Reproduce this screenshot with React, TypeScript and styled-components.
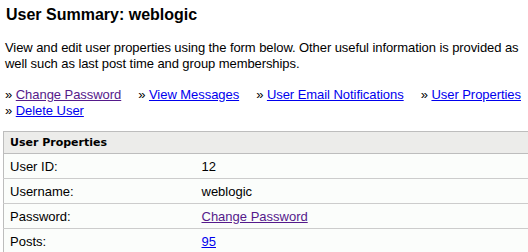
import styled, { createGlobalStyle } from "styled-components";

const GlobalStyle = createGlobalStyle`
  html, body {
    margin: 0;
    padding: 0;
    background: #fff;
    overflow: hidden;
  }
  body {
    font-family: "Liberation Sans", Arial, sans-serif;
    color: #000;
  }
`;

const Page = styled.div`
  padding: 0 0 0 3px;
`;

const Title = styled.h1`
  margin: 0;
  padding: 5px 0 0 3px;
  font-size: 16px;
  line-height: 20px;
  font-weight: bold;
`;

const Intro = styled.p`
  margin: 15px 0 0 2px;
  width: 523px;
  font-size: 13px;
  line-height: 16px;
  letter-spacing: -0.08px;
`;

const LinkBar = styled.div`
  margin: 15px 0 0 2px;
  display: flex;
  flex-wrap: wrap;
  column-gap: 17px;
  width: 523px;
  font-size: 13px;
  line-height: 16px;
  letter-spacing: -0.05px;
`;

const LinkItem = styled.span`
  white-space: nowrap;
`;

const Link = styled.a<{ $visited?: boolean }>`
  color: ${(p) => (p.$visited ? "#551a8b" : "#0000ee")};
  text-decoration: underline;
`;

const Table = styled.table`
  margin-top: 12px;
  width: 560px;
  table-layout: fixed;
  border-collapse: collapse;
  border-top: 1px solid #bdbdbd;
  border-left: 1px solid #bdbdbd;
  background: #fbfdfb;
`;

const LabelCol = styled.col`
  width: 192px;
`;

const HeadCell = styled.th`
  background: #ececea;
  border-bottom: 1px solid #bdbdbd;
  height: 21px;
  padding: 0 6px;
  text-align: left;
  font-family: "DejaVu Sans", Verdana, sans-serif;
  font-size: 11px;
  font-weight: bold;
`;

const Row = styled.tr`
  border-bottom: 1px solid #cccccc;
`;

const Cell = styled.td`
  height: 24px;
  padding: 0 6px;
  font-size: 13px;
`;

const links = [
  { text: "Change Password", visited: true },
  { text: "View Messages" },
  { text: "User Email Notifications" },
  { text: "User Properties" },
  { text: "Delete User" },
];

export default function App() {
  return (
    <Page>
      <GlobalStyle />
      <Title>User Summary: weblogic</Title>
      <Intro>
        View and edit user properties using the form below. Other useful information is provided as
        well such as last post time and group memberships.
      </Intro>
      <LinkBar>
        {links.map((l) => (
          <LinkItem key={l.text}>
            »&nbsp;<Link href="#" $visited={l.visited}>{l.text}</Link>
          </LinkItem>
        ))}
      </LinkBar>
      <Table>
        <colgroup>
          <LabelCol />
          <col />
        </colgroup>
        <thead>
          <tr>
            <HeadCell colSpan={2}>User Properties</HeadCell>
          </tr>
        </thead>
        <tbody>
          <Row>
            <Cell>User ID:</Cell>
            <Cell>12</Cell>
          </Row>
          <Row>
            <Cell>Username:</Cell>
            <Cell>weblogic</Cell>
          </Row>
          <Row>
            <Cell>Password:</Cell>
            <Cell>
              <Link href="#" $visited>Change Password</Link>
            </Cell>
          </Row>
          <Row>
            <Cell>Posts:</Cell>
            <Cell>
              <Link href="#">95</Link>
            </Cell>
          </Row>
        </tbody>
      </Table>
    </Page>
  );
}
